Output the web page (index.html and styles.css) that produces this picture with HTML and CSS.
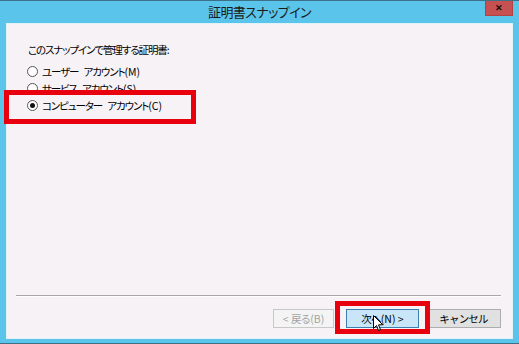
FILE: index.html
```html
<!DOCTYPE html>
<html lang="ja">
<head>
<meta charset="UTF-8">
<meta name="viewport" content="width=device-width, initial-scale=1.0">
<title>証明書スナップイン</title>
<link rel="stylesheet" href="styles.css">
</head>
<body>

<div class="dialog">
  <!-- Title bar -->
  <div class="titlebar">
    <span></span>
    <span class="title">証明書スナップイン</span>
    <button type="button" class="close-button">&#x2715;</button>
  </div>

  <!-- Dialog body -->
  <div class="panel">
    <p class="prompt">このスナップインで管理する証明書:</p>

    <div class="options">
      <label class="option"><span class="radio"></span>ユーザー アカウント<span class="key">(M)</span></label>
      <label class="option"><span class="radio"></span>サービス アカウント<span class="key">(S)</span></label>
      <label class="option"><span class="radio checked"></span>コンピューター アカウント<span class="key">(C)</span></label>
    </div>

    <div class="separator"></div>

    <div class="button-row">
      <button type="button" class="button back-button" disabled><span class="key">&lt; </span>戻る<span class="key">(B)</span></button>
      <button type="button" class="button next-button">次へ<span class="key">(N) &gt;</span></button>
      <button type="button" class="button cancel-button">キャンセル</button>
    </div>
  </div>

  <!-- Red highlight boxes drawn over the screenshot -->
  <div class="highlight highlight-option"></div>
  <div class="highlight highlight-next"></div>

  <!-- Mouse pointer -->
  <svg class="pointer" width="11" height="17" viewBox="0 0 11 17">
    <path d="M0.5 0.5 L0.5 13.5 L3.5 10.5 L5.5 15.5 L7.5 14.5 L5.5 9.8 L9.8 9.8 Z" fill="#fff" stroke="#000" stroke-width="1"/>
  </svg>
</div>

</body>
</html>
```

FILE: styles.css
```css
body {
  margin: 0;
  padding: 0;
  font-family: "Noto Sans CJK JP", "Noto Sans", sans-serif;
  font-feature-settings: "palt";
  background-color: #5bc4eb;
}
.dialog {
  position: relative;
  width: 519px;
  height: 344px;
  box-sizing: border-box;
  display: flex;
  flex-direction: column;
  background-color: #5bc4eb;
  border-top: 1px solid #3d6f86;
  border-bottom: 1px solid #3d6f86;
  overflow: hidden;
}
.titlebar {
  height: 22px;
  display: grid;
  grid-template-columns: 1fr auto 1fr;
  align-items: center;
}
.title {
  font-size: 13px;
  color: #1a1a1a;
  letter-spacing: -0.6px;
  line-height: 22px;
}
.close-button {
  justify-self: end;
  align-self: start;
  margin-right: 6px;
  margin-top: -1px;
  width: 28px;
  height: 16px;
  padding: 0;
  border: 1px solid #b04444;
  background-color: #c75050;
  color: #111;
  font-size: 9px;
  font-weight: bold;
  line-height: 14px;
  text-align: center;
}
.panel {
  flex-grow: 1;
  margin: 0 6px 4px 6px;
  background-color: #f6f2f6;
  border: 1px solid #e2f2f9;
  display: flex;
  flex-direction: column;
  padding: 0 11px 10px 9px;
}
.prompt {
  margin: 19px 0 6px 12px;
  font-size: 10.5px;
  letter-spacing: -1.1px;
  line-height: 14px;
  color: #000;
}
.options {
  display: flex;
  flex-direction: column;
  margin-left: 11px;
}
.option {
  display: flex;
  align-items: center;
  height: 17px;
  font-size: 10.5px;
  letter-spacing: -1.1px;
  word-spacing: 4px;
  white-space: pre;
  color: #000;
}
.key {
  letter-spacing: 0;
}
.radio {
  width: 9px;
  height: 9px;
  border: 1px solid #555;
  border-radius: 50%;
  background-color: #fff;
  margin-right: 4px;
  display: flex;
  align-items: center;
  justify-content: center;
}
.radio.checked::after {
  content: "";
  width: 5px;
  height: 5px;
  border-radius: 50%;
  background-color: #111;
}
.separator {
  margin-top: auto;
  height: 1px;
  background-color: #a8a8a8;
  border-bottom: 1px solid #fff;
}
.button-row {
  display: flex;
  justify-content: flex-end;
  margin-top: 12px;
}
.button {
  height: 19px;
  padding: 0;
  box-sizing: border-box;
  font-family: inherit;
  font-size: 10.5px;
  letter-spacing: -0.8px;
  line-height: 17px;
  white-space: pre;
  border: 1px solid #adadad;
  background-color: #e1e1e1;
  color: #000;
}
.back-button {
  width: 61px;
  background-color: #f4f4f4;
  border-color: #c8c8c8;
  color: #a3a3a3;
}
.next-button {
  width: 73px;
  margin-left: 12px;
  background-color: #c9e6f8;
  border-color: #3c7fb1;
}
.cancel-button {
  width: 75px;
  margin-left: 7px;
}
.highlight {
  position: absolute;
  border: 5px solid #e8000e;
  box-sizing: border-box;
}
.highlight-option {
  left: 4px;
  top: 89px;
  width: 192px;
  height: 34px;
}
.highlight-next {
  left: 335px;
  top: 300px;
  width: 95px;
  height: 33px;
}
.pointer {
  position: absolute;
  left: 373px;
  top: 314px;
}
```
